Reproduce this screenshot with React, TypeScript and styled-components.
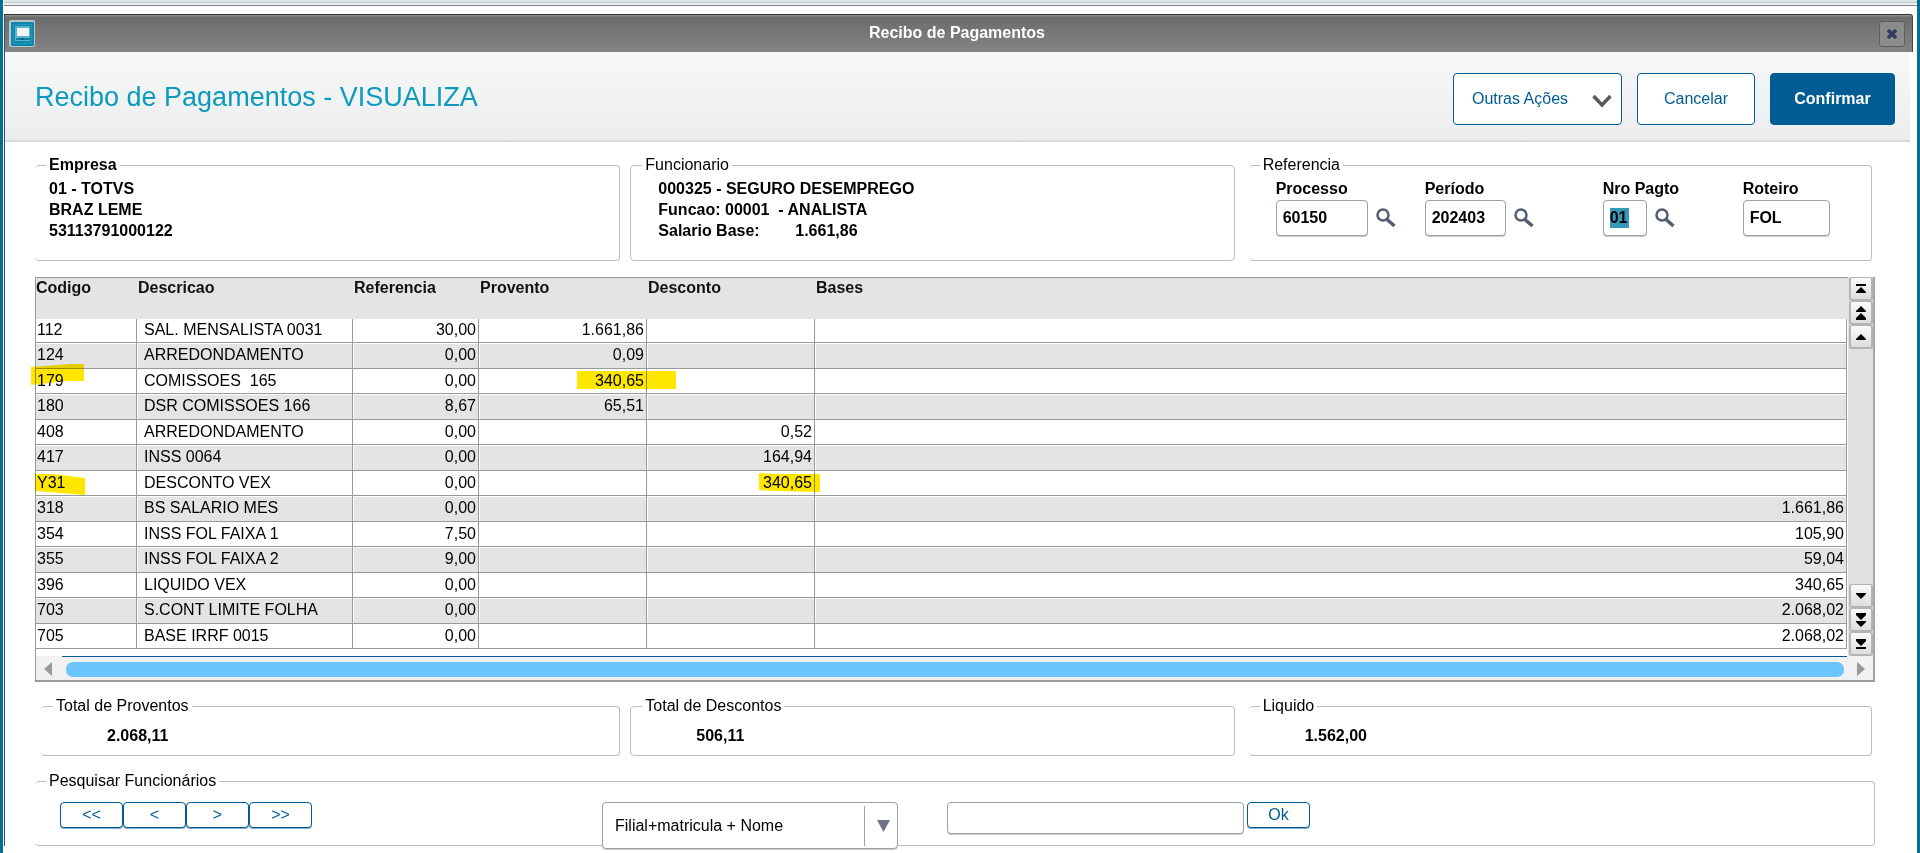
import React from "react";
import styled, { createGlobalStyle, css } from "styled-components";

const GlobalStyle = createGlobalStyle`
  * { box-sizing: border-box; }
  body {
    margin: 0;
    background: #fff;
    color: #000;
    font: 16px/20px "Liberation Sans", Arial, sans-serif;
  }
  button, input, select { font: inherit; color: inherit; margin: 0; }
  svg { display: block; }
`;

const blue = "#005c93";
const line = "#999";

const Shell = styled.div`
  min-height: 100vh;
  border: solid #046f8e;
  border-width: 0 3px;
  background: #fff;
`;

const TopStrip = styled.div`
  height: 6px;
  margin-left: 1px;
  background: linear-gradient(#dde5e7 0 2px, #bcc5c9 2px 3px, #eef0f1 3px 5px, #808086 5px 6px);
`;

const Window = styled.div`
  margin: 8px 4px 0 1px;
  border-left: 1px solid #23566b;
`;

const TitleBar = styled.header`
  display: flex;
  align-items: center;
  justify-content: space-between;
  height: 38px;
  padding: 0 7px 0 4px;
  border-top: 1px solid #333;
  border-right: 1px solid #444;
  border-radius: 0 3px 0 0;
  background: linear-gradient(#8d8d8d 0 1px, #6c6c6c 2px, #848484);
  color: #fff;
  font-weight: bold;
`;

const WindowTitle = styled.span`
  padding-bottom: 2px;
`;

const CloseButton = styled.button`
  display: grid;
  place-items: center;
  width: 26px;
  height: 26px;
  padding: 0;
  border: 1px solid #5d5d5d;
  border-radius: 3px;
  background: #8c8c8c;
`;

const ActionBar = styled.div`
  display: flex;
  align-items: center;
  gap: 15px;
  height: 90px;
  margin-right: 3px;
  padding: 6px 15px 0 30px;
  border-bottom: 2px solid #d8d8da;
  background: linear-gradient(#f6f7f7, #f3f5f4 35%, #ececef);
`;

const PageTitle = styled.h1`
  flex: 1;
  margin: 0;
  padding-bottom: 4px;
  color: #0c9abe;
  font-size: 27px;
  line-height: 32px;
  font-weight: normal;
`;

const ActionButton = styled.button<{ $width: number; $primary?: boolean; $menu?: boolean }>`
  display: flex;
  align-items: center;
  justify-content: ${(p) => (p.$menu ? "space-between" : "center")};
  width: ${(p) => p.$width}px;
  height: 52px;
  padding: ${(p) => (p.$menu ? "0 9px 0 18px" : "0")};
  border: 1px solid ${blue};
  border-radius: 4px;
  background: ${(p) => (p.$primary ? blue : "#fff")};
  color: ${(p) => (p.$primary ? "#fff" : blue)};
  font-weight: ${(p) => (p.$primary ? "bold" : "normal")};
`;

const Content = styled.main`
  padding: 13px 38px 0 30px;
`;

const PanelRow = styled.div`
  display: grid;
  grid-template-columns: 585fr 604fr 627fr;
  column-gap: 10px;
  padding-right: 3px;
`;

const Panel = styled.fieldset<{ $height: number; $open?: boolean; $indent?: number; $inset?: number }>`
  min-width: 0;
  height: ${(p) => p.$height}px;
  margin: 0 0 0 ${(p) => p.$indent ?? 0}px;
  padding: 3px 0 0 ${(p) => p.$inset ?? 14}px;
  border: 1px solid #bdbdbd;
  border-left-width: ${(p) => (p.$open ? 0 : 1)}px;
  border-radius: 4px;
`;

const Legend = styled.legend<{ $bold?: boolean; $inset?: number }>`
  margin-left: ${(p) => -(p.$inset ?? 3)}px;
  padding: 0 3px;
  font-weight: ${(p) => (p.$bold ? "bold" : "normal")};
`;

const Info = styled.p`
  margin: 0;
  font-weight: bold;
  line-height: 21px;
  white-space: pre;
`;

const FieldRow = styled.div`
  display: flex;
`;

const Field = styled.div<{ $width: number }>`
  width: ${(p) => p.$width}px;
`;

const FieldLabel = styled.label`
  display: block;
  font-weight: bold;
  line-height: 21px;
`;

const FieldLine = styled.div`
  display: flex;
  align-items: center;
  gap: 8px;
  margin-top: 1px;
`;

const boxed = css`
  border: 1px solid #9aa2a6;
  border-radius: 4px;
  background-color: #fff;
  box-shadow: 0 1px 0 #c9cdcf;
  outline: none;
`;

const TextBox = styled.input<{ $width: number; $height?: number; $selected?: boolean }>`
  ${boxed}
  width: ${(p) => p.$width}px;
  height: ${(p) => p.$height ?? 36}px;
  padding: 0 6px;
  font-weight: bold;
  ${(p) =>
    p.$selected &&
    css`
      background: linear-gradient(#349ab7, #349ab7) 6px center / 19px 20px no-repeat #fff;
    `}
`;

const LookupButton = styled.button`
  display: block;
  height: 20px;
  padding: 0;
  border: 0;
  background: none;
`;

const GridFrame = styled.section`
  display: grid;
  grid-template-columns: 1fr 25px;
  margin-top: 16px;
  border: 1px solid ${line};
  border-right: 2px solid #a6a6a6;
  border-bottom: 2px solid ${line};
`;

const TableArea = styled.div`
  padding: 0 1px 7px 0;
  background: linear-gradient(#e4e4e4 0 41px, #fff 41px);
`;

const Table = styled.table`
  width: 100%;
  border-collapse: separate;
  border-spacing: 0;
  table-layout: fixed;
`;

const HeadCell = styled.th<{ $width?: number }>`
  width: ${(p) => (p.$width ? `${p.$width}px` : "auto")};
  height: 41px;
  padding: 0 0 0 1px;
  text-align: left;
  vertical-align: top;
  background: #e4e4e4;
  color: #111;
  &:first-child { padding-left: 0; }
`;

const Cell = styled.td<{ $kind?: "code" | "text" }>`
  position: relative;
  padding: 0 2px 2px ${(p) => (p.$kind === "text" ? 7 : 1)}px;
  border: solid ${line};
  border-width: 0 1px 1px 0;
  box-shadow: inset ${(p) => (p.$kind === "code" ? 0 : 1)}px 1px #fff;
  text-align: ${(p) => (p.$kind ? "left" : "right")};
  line-height: 20px;
  white-space: pre;
`;

const Row = styled.tr<{ $shaded: boolean }>`
  height: ${(p) => (p.$shaded ? 26 : 25)}px;
  background: ${(p) => (p.$shaded ? "#e4e4e4" : "#fff")};
  &:first-child { height: 24px; }
  &:nth-child(2n + 3) ${Cell} { padding-bottom: 0; }
`;

const Marker = styled.svg<{ $side: "left" | "right"; $x: number; $y: number }>`
  position: absolute;
  z-index: 1;
  ${(p) => p.$side}: ${(p) => p.$x}px;
  top: ${(p) => p.$y}px;
  mix-blend-mode: multiply;
  pointer-events: none;
`;

const VerticalScroll = styled.div`
  display: flex;
  flex-direction: column;
  justify-content: space-between;
  margin-top: -1px;
  padding-left: 1px;
  background: #e2e2e2;
`;

const ScrollButton = styled.button`
  display: grid;
  place-items: center;
  width: 24px;
  height: 24px;
  padding: 0;
  border: solid #b4b4b4;
  border-width: 1px 2px 2px;
  border-radius: 3px;
  background: linear-gradient(#fafafa, #dedede);
`;

const HorizontalScroll = styled.div`
  grid-column: 1 / -1;
  display: flex;
  align-items: center;
  justify-content: space-between;
  height: 24px;
  padding: 2px 8px 0;
  background: linear-gradient(${blue}, ${blue}) 26px 0 / calc(100% - 52px) 1px no-repeat #f1f1f1;
`;

const ArrowButton = styled.button`
  display: block;
  padding: 0;
  border: 0;
  background: none;
`;

const Thumb = styled.div`
  flex: 1;
  height: 15px;
  margin: 0 13px 0 14px;
  border-radius: 7px;
  background: #6cc4fd;
`;

const Totals = styled(PanelRow)`
  margin: 14px 0 15px;
`;

const Total = styled.output`
  display: block;
  padding: 7px 0 0 48px;
  font-weight: bold;
`;

const SearchRow = styled.div`
  display: flex;
  align-items: flex-start;
  padding: 8px 0 0 11px;
`;

const SmallButton = styled.button`
  width: 63px;
  height: 26px;
  padding: 0;
  border: 1px solid ${blue};
  border-radius: 4px;
  box-shadow: 0 1px 0 #7fadc9;
  background: #fff;
  color: ${blue};
`;

const SelectWrap = styled.div`
  position: relative;
  margin: 0 49px 0 290px;
`;

const Select = styled.select`
  ${boxed}
  display: block;
  appearance: none;
  width: 296px;
  height: 47px;
  padding: 0 40px 0 12px;
`;

const SelectArrow = styled.svg`
  position: absolute;
  top: 4px;
  right: 8px;
  pointer-events: none;
`;

const SearchButton = styled(SmallButton)`
  margin-left: 3px;
`;

const AppIcon = () => (
  <svg width="26" height="27" viewBox="0 0 26 27" aria-hidden="true">
    <rect x="0" y="0" width="26" height="27" rx="2" fill="#b9c6ca" />
    <rect x="2" y="2" width="23" height="24" rx="1" fill="#0d87ab" />
    <rect x="4.500" y="4.500" width="18" height="19" fill="none" stroke="#2496b8" />
    <path d="M6 6H21V21H6Z" fill="#5db2cc" />
    <rect x="8" y="8" width="12" height="8" fill="#f4f5f6" />
    <rect x="7" y="18" width="14" height="2" fill="#117f9f" />
    <rect x="12" y="18" width="3" height="2" fill="#0a6683" />
  </svg>
);

const CloseIcon = () => (
  <svg width="10" height="10" viewBox="0 0 10 10" aria-hidden="true">
    <path d="M1 1L9 9M9 1L1 9" stroke="#2f3a5c" strokeWidth="3.400" />
  </svg>
);

const SearchIcon = () => (
  <svg width="20" height="20" viewBox="0 0 20 20" fill="none" stroke="#535d70" aria-hidden="true">
    <circle cx="7" cy="7" r="5.500" strokeWidth="2.500" />
    <path d="M11 11.500L18.500 18" strokeWidth="3.500" />
  </svg>
);

const ChevronIcon = () => (
  <svg width="20" height="18" viewBox="0 0 20 18" aria-hidden="true">
    <path d="M1.500 6L10 15L18.500 6" fill="none" stroke="#5a5a5a" strokeWidth="3.500" />
  </svg>
);

type Glyph = "first" | "pageUp" | "up" | "down" | "pageDown" | "last";

const glyphs: Record<Glyph, string> = {
  first: "M1 1h10v2H1zM6 4l5 5v1H1V9z",
  pageUp: "M6 -1l5 5v1H1V4zM6 6l5 5v2H1v-2z",
  up: "M6 3l5 5v1H1V8z",
  down: "M1 3h10v1L6 9L1 4z",
  pageDown: "M1 -1h10v2L6 6L1 1zM1 7h10v1l-5 5L1 8z",
  last: "M1 1h10v2L6 8L1 3zM1 9h10v2H1z",
};

const ScrollControl = ({ glyph, label }: { glyph: Glyph; label: string }) => (
  <ScrollButton type="button" aria-label={label}>
    <svg width="12" height="14" viewBox="0 -1 12 14" aria-hidden="true">
      <path d={glyphs[glyph]} />
    </svg>
  </ScrollButton>
);

type Entry = [code: string, text: string, ref: string, credit: string, debit: string, base: string];

const entries: Entry[] = [
  ["112", "SAL. MENSALISTA 0031", "30,00", "1.661,86", "", ""],
  ["124", "ARREDONDAMENTO", "0,00", "0,09", "", ""],
  ["179", "COMISSOES  165", "0,00", "340,65", "", ""],
  ["180", "DSR COMISSOES 166", "8,67", "65,51", "", ""],
  ["408", "ARREDONDAMENTO", "0,00", "", "0,52", ""],
  ["417", "INSS 0064", "0,00", "", "164,94", ""],
  ["Y31", "DESCONTO VEX", "0,00", "", "340,65", ""],
  ["318", "BS SALARIO MES", "0,00", "", "", "1.661,86"],
  ["354", "INSS FOL FAIXA 1", "7,50", "", "", "105,90"],
  ["355", "INSS FOL FAIXA 2", "9,00", "", "", "59,04"],
  ["396", "LIQUIDO VEX", "0,00", "", "", "340,65"],
  ["703", "S.CONT LIMITE FOLHA", "0,00", "", "", "2.068,02"],
  ["705", "BASE IRRF 0015", "0,00", "", "", "2.068,02"],
];

const yellow = "#ffe600";

const markers: Record<string, React.ReactNode> = {
  "179-0": (
    <Marker $side="left" $x={-5} $y={-6} width="53" height="24">
      <path d="M0 4L40 1L53 1V18L36 18L0 22Z" fill={yellow} />
    </Marker>
  ),
  "179-3": (
    <Marker $side="right" $x={-30} $y={1} width="99" height="19">
      <path d="M0 1H99V19H0Z" fill={yellow} />
    </Marker>
  ),
  "Y31-0": (
    <Marker $side="left" $x={-1} $y={2} width="50" height="23">
      <path d="M0 1L18 1L50 5V22L38 21L0 18Z" fill={yellow} />
    </Marker>
  ),
  "Y31-4": (
    <Marker $side="right" $x={-6} $y={1} width="61" height="20">
      <path d="M0 1L20 2H61V20L18 19L0 18Z" fill={yellow} />
    </Marker>
  ),
};

const columns: [string, number?][] = [
  ["Codigo", 101],
  ["Descricao", 216],
  ["Referencia", 126],
  ["Provento", 168],
  ["Desconto", 168],
  ["Bases"],
];

const LookupField = ({
  id,
  label,
  value,
  width,
  boxWidth,
  selected,
  lookup = true,
}: {
  id: string;
  label: string;
  value: string;
  width: number;
  boxWidth: number;
  selected?: boolean;
  lookup?: boolean;
}) => (
  <Field $width={width}>
    <FieldLabel htmlFor={id}>{label}</FieldLabel>
    <FieldLine>
      <TextBox id={id} $width={boxWidth} $selected={selected} defaultValue={value} />
      {lookup && (
        <LookupButton type="button" aria-label={`Pesquisar ${label}`}>
          <SearchIcon />
        </LookupButton>
      )}
    </FieldLine>
  </Field>
);

export default function App() {
  return (
    <Shell>
      <GlobalStyle />
      <TopStrip />
      <Window>
        <TitleBar>
          <AppIcon />
          <WindowTitle>Recibo de Pagamentos</WindowTitle>
          <CloseButton type="button" aria-label="Fechar">
            <CloseIcon />
          </CloseButton>
        </TitleBar>
        <ActionBar>
          <PageTitle>Recibo de Pagamentos - VISUALIZA</PageTitle>
          <ActionButton type="button" $width={169} $menu>
            Outras Ações
            <ChevronIcon />
          </ActionButton>
          <ActionButton type="button" $width={118}>Cancelar</ActionButton>
          <ActionButton type="button" $width={125} $primary>Confirmar</ActionButton>
        </ActionBar>
        <Content>
          <PanelRow>
            <Panel $height={106} $open>
              <Legend $bold>Empresa</Legend>
              <Info>01 - TOTVS</Info>
              <Info>BRAZ LEME</Info>
              <Info>53113791000122</Info>
            </Panel>
            <Panel $height={106} $inset={27}>
              <Legend $inset={16}>Funcionario</Legend>
              <Info>000325 - SEGURO DESEMPREGO</Info>
              <Info>Funcao: 00001  - ANALISTA</Info>
              <Info>{"Salario Base:        1.661,86"}</Info>
            </Panel>
            <Panel $height={106} $open $indent={4} $inset={27}>
              <Legend $inset={16}>Referencia</Legend>
              <FieldRow>
                <LookupField id="processo" label="Processo" value="60150" width={149} boxWidth={92} />
                <LookupField id="periodo" label="Período" value="202403" width={178} boxWidth={81} />
                <LookupField id="pagto" label="Nro Pagto" value="01" width={140} boxWidth={44} selected />
                <LookupField id="roteiro" label="Roteiro" value="FOL" width={87} boxWidth={87} lookup={false} />
              </FieldRow>
            </Panel>
          </PanelRow>

          <GridFrame>
            <TableArea>
              <Table>
                <thead>
                  <tr>
                    {columns.map(([name, width]) => (
                      <HeadCell key={name} scope="col" $width={width}>{name}</HeadCell>
                    ))}
                  </tr>
                </thead>
                <tbody>
                  {entries.map((entry, index) => (
                    <Row key={entry[0]} $shaded={index % 2 === 1}>
                      {entry.map((value, col) => (
                        <Cell key={col} $kind={col === 0 ? "code" : col === 1 ? "text" : undefined}>
                          {value}
                          {markers[`${entry[0]}-${col}`]}
                        </Cell>
                      ))}
                    </Row>
                  ))}
                </tbody>
              </Table>
            </TableArea>
            <VerticalScroll>
              <div>
                <ScrollControl glyph="first" label="Primeiro" />
                <ScrollControl glyph="pageUp" label="Página anterior" />
                <ScrollControl glyph="up" label="Linha anterior" />
              </div>
              <div>
                <ScrollControl glyph="down" label="Próxima linha" />
                <ScrollControl glyph="pageDown" label="Próxima página" />
                <ScrollControl glyph="last" label="Último" />
              </div>
            </VerticalScroll>
            <HorizontalScroll>
              <ArrowButton type="button" aria-label="Rolar para a esquerda">
                <svg width="8" height="14" viewBox="0 0 8 14" aria-hidden="true">
                  <path d="M8 0V14L0 7Z" fill="#999" />
                </svg>
              </ArrowButton>
              <Thumb />
              <ArrowButton type="button" aria-label="Rolar para a direita">
                <svg width="8" height="14" viewBox="0 0 8 14" aria-hidden="true">
                  <path d="M0 0V14L8 7Z" fill="#999" />
                </svg>
              </ArrowButton>
            </HorizontalScroll>
          </GridFrame>

          <Totals>
            <Panel $height={60} $open $indent={6} $inset={18}>
              <Legend $inset={6}>Total de Proventos</Legend>
              <Total>2.068,11</Total>
            </Panel>
            <Panel $height={60} $inset={17}>
              <Legend $inset={6}>Total de Descontos</Legend>
              <Total>506,11</Total>
            </Panel>
            <Panel $height={60} $open $indent={4} $inset={8}>
              <Legend $inset={-3}>Liquido</Legend>
              <Total>1.562,00</Total>
            </Panel>
          </Totals>

          <Panel $height={75} $open>
            <Legend>Pesquisar Funcionários</Legend>
            <SearchRow>
              <SmallButton type="button" aria-label="Primeiro funcionário">&lt;&lt;</SmallButton>
              <SmallButton type="button" aria-label="Funcionário anterior">&lt;</SmallButton>
              <SmallButton type="button" aria-label="Próximo funcionário">&gt;</SmallButton>
              <SmallButton type="button" aria-label="Último funcionário">&gt;&gt;</SmallButton>
              <SelectWrap>
                <Select aria-label="Ordem da pesquisa" defaultValue="nome">
                  <option value="nome">Filial+matricula + Nome</option>
                </Select>
                <SelectArrow width="26" height="40" viewBox="0 0 26 40" aria-hidden="true">
                  <path d="M0 0H1V40H0Z" fill="#9aa2a6" />
                  <path d="M13 14H26L19.500 26Z" fill="#6d7385" />
                </SelectArrow>
              </SelectWrap>
              <TextBox $width={297} $height={32} aria-label="Texto da pesquisa" />
              <SearchButton type="button">Ok</SearchButton>
            </SearchRow>
          </Panel>
        </Content>
      </Window>
    </Shell>
  );
}
